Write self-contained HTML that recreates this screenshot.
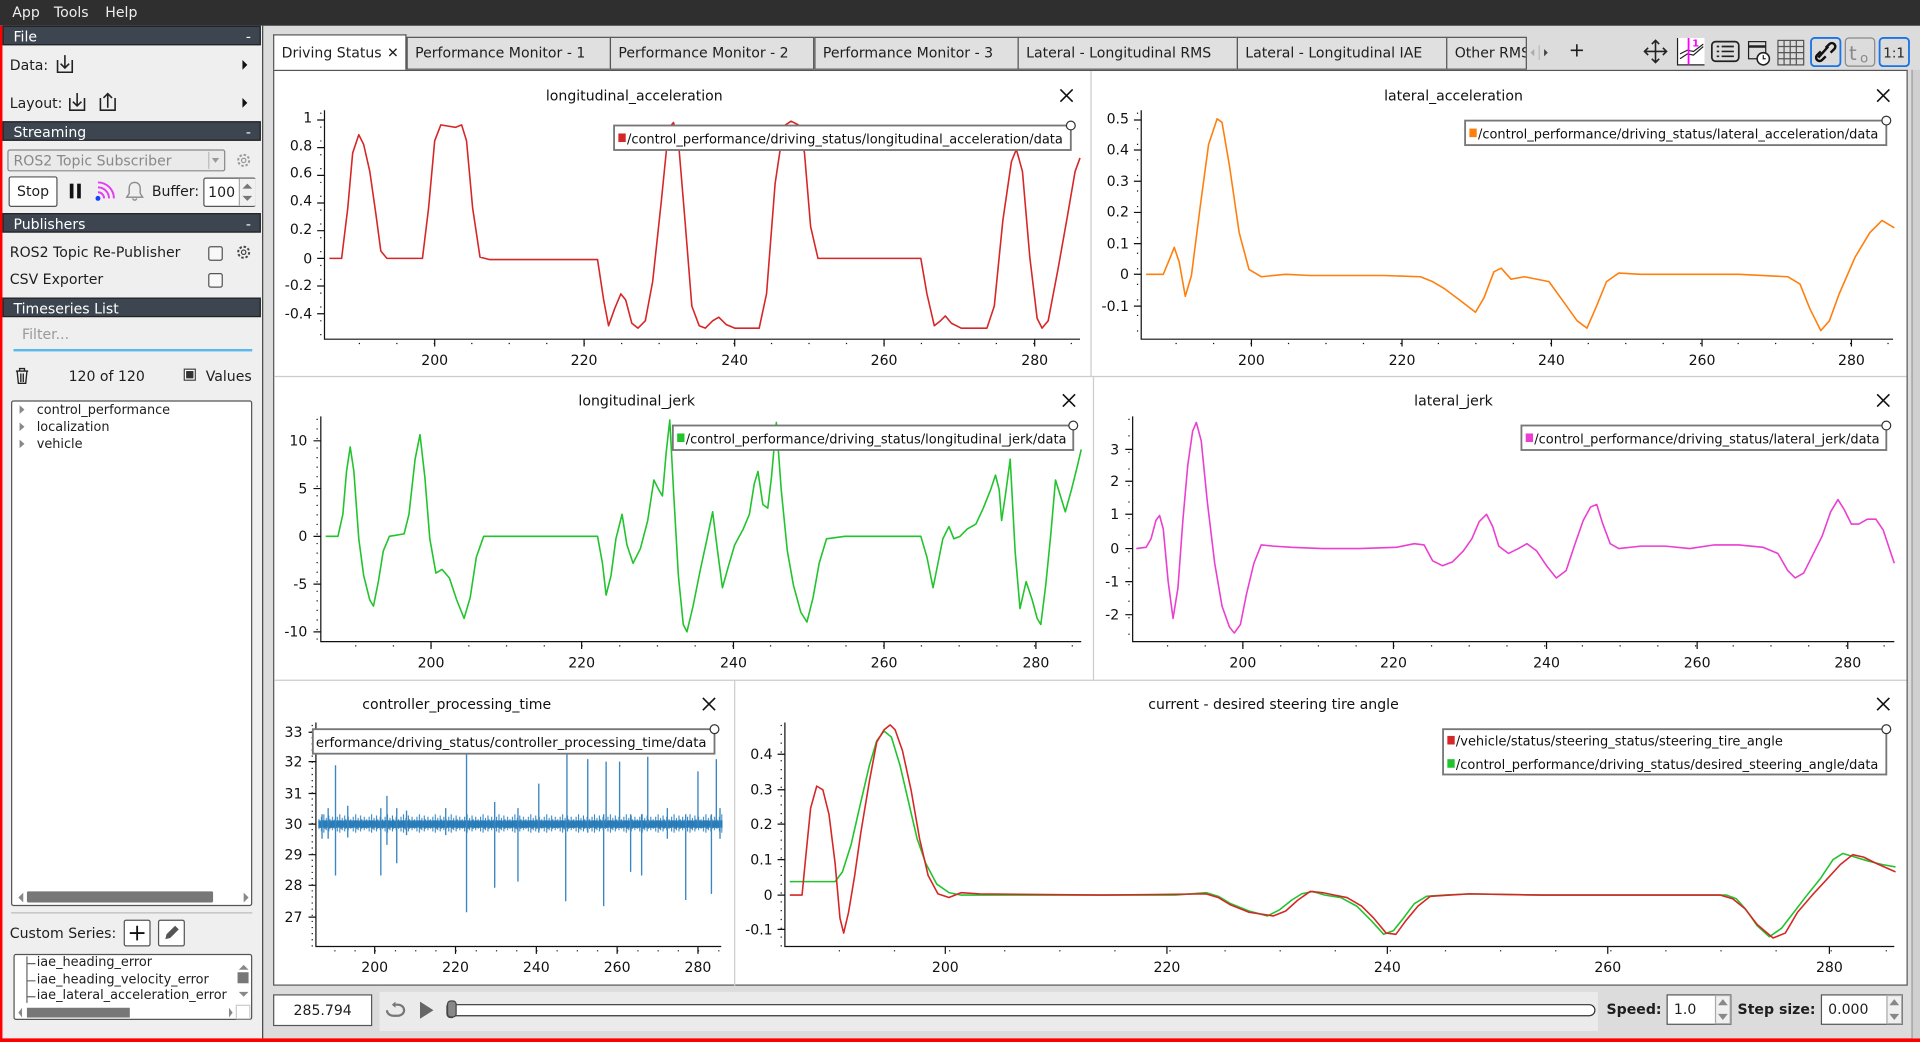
<!DOCTYPE html>
<html><head><meta charset="utf-8">
<style>
html,body{margin:0;padding:0;width:1920px;height:1042px;overflow:hidden;background:#dcdcdc;}
#w{position:absolute;left:0;top:0;width:1568px;height:851px;transform:scale(1.22449);transform-origin:0 0;font-family:"DejaVu Sans","Liberation Sans",sans-serif;font-size:11px;color:#1e1e1e;background:#dcdcdc;}
.a{position:absolute;}
.hdr{position:absolute;left:2px;width:211px;height:16px;background:#3c4550;color:#fff;font-size:11.5px;line-height:16px;border:1px solid #222;box-sizing:border-box;padding-left:8px;}
.hdr span{position:absolute;right:7px;top:0;}
.cb{position:absolute;width:10px;height:10px;border:1px solid #555;border-radius:2px;background:#f8f8f8;}
.tab{position:absolute;top:30px;height:27px;background:#e0e0e0;border:1px solid #555;box-sizing:border-box;font-size:11.5px;line-height:25px;padding-left:6px;white-space:nowrap;overflow:hidden;}
</style></head><body><div id="w">
<div class="a" style="left:0;top:0;width:1568px;height:21px;background:#2f2f2f;"></div>
<div class="a" style="left:10px;top:3px;color:#eee;font-size:11.5px;">App</div>
<div class="a" style="left:44px;top:3px;color:#eee;font-size:11.5px;">Tools</div>
<div class="a" style="left:86px;top:3px;color:#eee;font-size:11.5px;">Help</div>
<div class="a" style="left:0;top:21px;width:214px;height:830px;background:#efefef;"></div>
<div class="a" style="left:0;top:21px;width:2px;height:830px;background:#f00;"></div>
<div class="a" style="left:0;top:848px;width:1568px;height:3px;background:#f00;"></div>
<div class="a" style="left:214px;top:21px;width:1px;height:827px;background:#444;"></div>
<div class="hdr" style="top:21px;">File<span>-</span></div>
<div class="a" style="left:8px;top:46px;font-size:11.5px;">Data:</div>
<div class="a" style="left:8px;top:77px;font-size:11.5px;">Layout:</div>
<svg class="a" style="left:0;top:21px" width="214" height="80" viewBox="0 21 214 80">
<g fill="none" stroke="#222" stroke-width="1.3">
<path d="M47 49v10h12v-10M53 45v10M49.5 52l3.5 3.5 3.5-3.5"/>
<path d="M57 80v10h12v-10M63 76v10M59.5 83l3.5 3.5 3.5-3.5"/>
<path d="M82 80v10h12v-10M88 88v-11M84.5 80l3.5-3.5 3.5 3.5"/>
</g>
<path d="M198 49v8l4-4z M198 80v8l4-4z" fill="#111"/>
</svg>
<div class="hdr" style="top:99px;">Streaming<span>-</span></div>
<div class="a" style="left:6px;top:122px;width:178px;height:18px;border:1px solid #888;border-radius:2px;box-sizing:border-box;background:#eaeaea;color:#888;font-size:11.5px;line-height:16px;padding-left:4px;">ROS2 Topic Subscriber</div>
<div class="a" style="left:170px;top:124px;width:12px;height:14px;border-left:1px solid #bbb;"></div>
<svg class="a" style="left:172px;top:128px" width="8" height="6"><path d="M1 1h6l-3 4z" fill="#999"/></svg>
<svg class="a" style="left:192px;top:124px" width="14" height="14" viewBox="0 0 14 14"><circle cx="7" cy="7" r="4.5" fill="none" stroke="#999" stroke-width="1.6" stroke-dasharray="2 1.5"/><circle cx="7" cy="7" r="1.8" fill="none" stroke="#999"/></svg>
<div class="a" style="left:7px;top:144px;width:40px;height:25px;border:1px solid #555;border-radius:2px;box-sizing:border-box;background:#fff;font-size:11.5px;line-height:23px;text-align:center;">Stop</div>
<div class="a" style="left:57px;top:150px;width:3px;height:12px;background:#111;"></div>
<div class="a" style="left:63px;top:150px;width:3px;height:12px;background:#111;"></div>
<svg class="a" style="left:76px;top:147px" width="20" height="18" viewBox="0 0 20 18"><circle cx="4" cy="15" r="2" fill="#1540ff"/><path d="M4 10a5 5 0 0 1 5 5M4 6a9 9 0 0 1 9 9M4 2a13 13 0 0 1 13 13" fill="none" stroke="#e040f0" stroke-width="1.6"/></svg>
<svg class="a" style="left:102px;top:147px" width="16" height="18" viewBox="0 0 16 18"><path d="M8 2c-3 0-4.5 2-4.5 5v4l-2 3h13l-2-3V7c0-3-1.5-5-4.5-5zM6.5 15a1.5 1.5 0 0 0 3 0" fill="none" stroke="#888" stroke-width="1.1"/></svg>
<div class="a" style="left:124px;top:149px;font-size:11.5px;">Buffer:</div>
<div class="a" style="left:166px;top:145px;width:43px;height:24px;border:1px solid #555;border-radius:2px;box-sizing:border-box;background:#fff;font-size:11.5px;line-height:22px;padding-left:3px;">100</div>
<div class="a" style="left:195px;top:146px;width:13px;height:22px;border-left:1px solid #aaa;background:#f0f0f0;"></div>
<svg class="a" style="left:196px;top:147px" width="12" height="20"><path d="M2 7l4-4 4 4z M2 13l4 4 4-4z" fill="#777"/></svg>
<div class="hdr" style="top:174px;">Publishers<span>-</span></div>
<div class="a" style="left:8px;top:199px;font-size:11.5px;">ROS2 Topic Re-Publisher</div>
<div class="cb" style="left:170px;top:201px;"></div>
<svg class="a" style="left:192px;top:199px" width="14" height="14" viewBox="0 0 14 14"><circle cx="7" cy="7" r="4.5" fill="none" stroke="#444" stroke-width="1.6" stroke-dasharray="2 1.5"/><circle cx="7" cy="7" r="1.8" fill="none" stroke="#444"/></svg>
<div class="a" style="left:8px;top:221px;font-size:11.5px;">CSV Exporter</div>
<div class="cb" style="left:170px;top:223px;"></div>
<div class="hdr" style="top:243px;">Timeseries List</div>
<div class="a" style="left:18px;top:266px;color:#999;font-size:11.5px;">Filter...</div>
<div class="a" style="left:11px;top:285px;width:195px;height:2px;background:#5ab8ec;"></div>
<svg class="a" style="left:11px;top:299px" width="14" height="16" viewBox="0 0 14 16"><path d="M2 4h10M5 4V2h4v2M3 4l1 10h6l1-10M6 6v7M8 6v7" fill="none" stroke="#222" stroke-width="1.1"/></svg>
<div class="a" style="left:56px;top:300px;font-size:11.5px;">120 of 120</div>
<div class="a" style="left:150px;top:301px;width:10px;height:10px;border:1px solid #444;box-sizing:border-box;background:#fff;"></div>
<div class="a" style="left:152px;top:303px;width:6px;height:6px;background:#333;"></div>
<div class="a" style="left:168px;top:300px;font-size:11.5px;">Values</div>
<div class="a" style="left:9px;top:327px;width:197px;height:413px;border:1px solid #555;border-radius:2px;box-sizing:border-box;background:#fff;"></div>
<div class="a" style="left:30px;top:328px;font-size:10.5px;line-height:14px;">control_performance<br>localization<br>vehicle</div>
<svg class="a" style="left:14px;top:330px" width="8" height="40"><path d="M2 1l4 3.5-4 3.5z M2 15l4 3.5-4 3.5z M2 29l4 3.5-4 3.5z" fill="#888"/></svg>
<div class="a" style="left:22px;top:728px;width:152px;height:9px;background:#777;border-radius:1px;"></div>
<svg class="a" style="left:12px;top:727px" width="194" height="12"><path d="M7 2v8l-4-4z M187 2v8l4-4z" fill="#888"/></svg>
<div class="a" style="left:9px;top:745px;width:197px;height:1px;background:#bbb;"></div>
<div class="a" style="left:8px;top:755px;font-size:11.5px;">Custom Series:</div>
<div class="a" style="left:101px;top:751px;width:22px;height:22px;border:1px solid #555;border-radius:2px;box-sizing:border-box;background:#fff;"></div>
<svg class="a" style="left:101px;top:751px" width="22" height="22"><path d="M11 5v12M5 11h12" stroke="#111" stroke-width="1.5"/></svg>
<div class="a" style="left:129px;top:751px;width:22px;height:22px;border:1px solid #555;border-radius:2px;box-sizing:border-box;background:#fff;"></div>
<svg class="a" style="left:129px;top:751px" width="22" height="22"><path d="M6 16l1-4 7-7 3 3-7 7z" fill="#555"/></svg>
<div class="a" style="left:11px;top:779px;width:195px;height:54px;border:1px solid #555;border-radius:2px;box-sizing:border-box;background:#fff;"></div>
<div class="a" style="left:30px;top:780px;font-size:10.5px;line-height:13.7px;white-space:nowrap;">iae_heading_error<br>iae_heading_velocity_error<br>iae_lateral_acceleration_error</div>
<svg class="a" style="left:11px;top:779px" width="195" height="54"><path d="M11 2v38M11 8h7M11 22h7M11 35h7" stroke="#666" fill="none"/><path d="M184 13l4-4 4 4z M184 31l4 4 4-4z" fill="#888"/><rect x="183" y="15" width="9" height="9" fill="#777"/><rect x="11" y="44" width="84" height="8" fill="#777"/><path d="M7 44v8l-3-4z M176 44v8l3-4z" fill="#888"/><rect x="182" y="42" width="11" height="11" fill="#fff" stroke="#ccc"/></svg>
<div class="tab" style="left:223px;top:28px;width:109px;height:30px;background:#fff;border-bottom:none;line-height:29px;">Driving Status <span style="position:absolute;left:92px;top:0;">✕</span></div>
<div class="tab" style="left:332px;width:167px;">Performance Monitor - 1</div>
<div class="tab" style="left:498px;width:167px;">Performance Monitor - 2</div>
<div class="tab" style="left:665px;width:167px;">Performance Monitor - 3</div>
<div class="tab" style="left:831px;width:180px;">Lateral - Longitudinal RMS</div>
<div class="tab" style="left:1010px;width:172px;">Lateral - Longitudinal IAE</div>
<div class="tab" style="left:1181px;width:66px;">Other RMS</div>
<svg class="a" style="left:1245px;top:35px" width="24" height="16"><path d="M8 5v6l-3-3z" fill="#aaa"/><path d="M16 5v6l3-3z" fill="#444"/><path d="M12 2v12" stroke="#bbb"/></svg>
<div class="a" style="left:1281px;top:31px;font-size:16px;">+</div>
<svg class="a" style="left:1335px;top:28px" width="233" height="28" viewBox="0 0 233 28">
<g stroke="#222" stroke-width="1.3" fill="none"><path d="M17 5v18M8 14h18M14 8l3-3 3 3M14 20l3 3 3-3M11 11l-3 3 3 3M23 11l3 3-3 3"/></g>
<rect x="35" y="3" width="22" height="22" fill="#fff"/><path d="M35 3v22h22" stroke="#222" fill="none"/><path d="M37 20l6-4 5 1 8-7M37 16l6-3 5 1 8-6" stroke="#222" fill="none"/><path d="M44 3v22" stroke="#f0f" stroke-width="1.5"/><text x="47" y="10" font-size="8" fill="#f0f" font-weight="bold">1</text>
<rect x="63" y="6" width="22" height="16" rx="3" fill="none" stroke="#222" stroke-width="1.4"/><path d="M67 10h2M71 10h10M67 14h2M71 14h10M67 18h2M71 18h10" stroke="#222" stroke-width="1.4"/>
<rect x="93" y="6" width="14" height="14" fill="none" stroke="#222"/><path d="M93 10h14" stroke="#222" stroke-width="2"/><circle cx="105" cy="20" r="5" fill="#fff" stroke="#222" stroke-width="1.3"/><path d="M105 17v3h2" stroke="#222" fill="none"/>
<g stroke="#555" fill="none"><rect x="117" y="5" width="21" height="20"/><path d="M122 5v20M127 5v20M132 5v20M117 10h21M117 15h21M117 20h21"/></g>
<rect x="144" y="3" width="24" height="23" rx="3" fill="none" stroke="#1a73e8" stroke-width="1.5"/><path d="M150 19l8-9" stroke="#111" stroke-width="2"/><path d="M152 14l-3 3a2.5 2.5 0 0 0 4 4l3-3M160 15l3-3a2.5 2.5 0 0 0-4-4l-3 3" stroke="#111" stroke-width="2" fill="none"/>
<rect x="172" y="3" width="24" height="23" rx="3" fill="none" stroke="#888" stroke-width="1"/><text x="175" y="21" font-size="16" fill="#888">t</text><text x="184" y="23" font-size="11" fill="#888">o</text>
<rect x="200" y="3" width="24" height="23" rx="3" fill="none" stroke="#1a73e8" stroke-width="1.5"/><text x="203" y="19" font-size="11" fill="#222">1:1</text>
</svg>
<div class="a" style="left:223px;top:57px;width:1335px;height:748px;background:#fff;border:1px solid #555;box-sizing:border-box;"></div>
<div class="a" style="left:1561px;top:57px;width:7px;height:791px;background:#d0d0d0;border-left:1px solid #999;"></div>
<div class="a" style="left:310px;top:810px;width:995px;height:32px;background:#ebebeb;"></div>
<div class="a" style="left:223px;top:812px;width:81px;height:26px;border:1px solid #555;box-sizing:border-box;background:#fff;font-size:11.5px;line-height:24px;text-align:center;">285.794</div>
<svg class="a" style="left:310px;top:812px" width="60" height="26"><path d="M6 13a5 4.5 0 0 0 5 4.5h4a5 4.5 0 0 0 0-9h-4" fill="none" stroke="#777" stroke-width="1.8"/><path d="M13 6l-3 2.5 3 2.5z" fill="#777"/><path d="M33 6v14l11-7z" fill="#666"/><rect x="55" y="7" width="8" height="12" rx="3" fill="#888" stroke="#444"/></svg>
<div class="a" style="left:367px;top:820px;width:936px;height:10px;border:1px solid #333;border-radius:5px;box-sizing:border-box;background:#fff;"></div>
<div class="a" style="left:365px;top:817px;width:8px;height:14px;border-radius:3px;background:#888;border:1px solid #444;box-sizing:border-box;"></div>
<div class="a" style="left:1312px;top:817px;font-weight:bold;font-size:11.5px;">Speed:</div>
<div class="a" style="left:1361px;top:812px;width:53px;height:25px;border:1px solid #555;box-sizing:border-box;background:#fff;font-size:11.5px;line-height:23px;padding-left:5px;">1.0</div>
<div class="a" style="left:1419px;top:817px;font-weight:bold;font-size:11.5px;">Step size:</div>
<div class="a" style="left:1487px;top:812px;width:67px;height:25px;border:1px solid #555;box-sizing:border-box;background:#fff;font-size:11.5px;line-height:23px;padding-left:5px;">0.000</div>
<svg class="a" style="left:1400px;top:812px" width="160" height="25"><g fill="#f0f0f0" stroke="#aaa"><rect x="1" y="1" width="12" height="23"/><rect x="141" y="1" width="12" height="23"/></g><path d="M3 9l4-5 4 5zM3 16l4 5 4-5zM143 9l4-5 4 5zM143 16l4 5 4-5z" fill="#888"/></svg>

<svg class="a" style="left:0;top:0" width="1568" height="851" viewBox="0 0 1568 851" font-family="DejaVu Sans, Liberation Sans, sans-serif">
<defs>
<pattern id="nz" x="0" y="661" width="13" height="24" patternUnits="userSpaceOnUse">
<g stroke="#3a86c0" stroke-width="0.9">
<path d="M0.5 8v8M1.5 10v5M2.5 6v12M3.5 9v5M4.5 4v15M5.5 9v7M6.5 7v10M7.5 10v4M8.5 5v13M9.5 8v8M10.5 10v5M11.5 6v11M12.5 9v6"/>
</g>
</pattern>
</defs>
<g stroke="#ccc"><path d="M891 58v249M893 308v247M600 556v249M224 307.5h1333M224 555.5h1333"/></g>
<g font-size="11.5" fill="#111" text-anchor="middle">
<text x="518" y="82">longitudinal_acceleration</text>
<text x="1187" y="82">lateral_acceleration</text>
<text x="520" y="331">longitudinal_jerk</text>
<text x="1187" y="331">lateral_jerk</text>
<text x="373" y="579">controller_processing_time</text>
<text x="1040" y="579">current - desired steering tire angle</text>
</g>
<g stroke="#111" stroke-width="1.3"><path d="M866 73l10 10M876 73l-10 10M1533 73l10 10M1543 73l-10 10M868 322l10 10M878 322l-10 10M1533 322l10 10M1543 322l-10 10M574 570l10 10M584 570l-10 10M1533 570l10 10M1543 570l-10 10"/></g>
<g stroke="#111" fill="none">
<path d="M265 90v187h617"/><path d="M932 90v187h614"/>
<path d="M262 340v184h621"/><path d="M925 340v184h622"/>
<path d="M258 590v183h331"/><path d="M641 590v183h906"/>
</g>
<g stroke="#111" stroke-width="1">
<path d="M259 98h6M259 120.6h6M259 143.2h6M259 165.8h6M259 188.4h6M259 211h6M259 233.6h6M259 256.2h6"/>
<path d="M926 98h6M926 122.5h6M926 148h6M926 173.5h6M926 199h6M926 224h6M926 250h6"/>
<path d="M256 360h6M256 399h6M256 438h6M256 477h6M256 516h6"/>
<path d="M919 367h6M919 393h6M919 420h6M919 448h6M919 475h6M919 502h6"/>
<path d="M252 598h6M252 622h6M252 648h6M252 673h6M252 698h6M252 723h6M252 749h6"/>
<path d="M635 616h6M635 645h6M635 673h6M635 702h6M635 731h6M635 759h6"/>
<path d="M355 277v6M477 277v6M600 277v6M722 277v6M845 277v6"/>
<path d="M1022 277v6M1145 277v6M1267 277v6M1390 277v6M1512 277v6"/>
<path d="M352 524v6M475 524v6M599 524v6M722 524v6M846 524v6"/>
<path d="M1015 524v6M1138 524v6M1263 524v6M1386 524v6M1509 524v6"/>
<path d="M306 773v6M372 773v6M438 773v6M504 773v6M570 773v6"/>
<path d="M772 773v6M953 773v6M1133 773v6M1313 773v6M1494 773v6"/>
</g>
<g stroke="#111" stroke-width="1">
<path d="M270 280.5H882" stroke-dasharray="1 29.6" stroke-dashoffset="-23"/>
<path d="M937 280.5H1546" stroke-dasharray="1 29.6" stroke-dashoffset="-23"/>
<path d="M267 527.5H883" stroke-dasharray="1 29.8" stroke-dashoffset="-23"/>
<path d="M930 527.5H1547" stroke-dasharray="1 29.8" stroke-dashoffset="-23"/>
<path d="M262 776.5H589" stroke-dasharray="1 15.5" stroke-dashoffset="-11"/>
<path d="M645 776.5H1547" stroke-dasharray="1 44" stroke-dashoffset="-40"/>
<path d="M262 92V277" stroke-dasharray="1 10.3"/>
<path d="M929 92V277" stroke-dasharray="1 11.7"/>
<path d="M259 342V524" stroke-dasharray="1 6.8"/>
<path d="M922 342V524" stroke-dasharray="1 12.5"/>
<path d="M255 592V773" stroke-dasharray="1 4"/>
<path d="M638 592V773" stroke-dasharray="1 6.2"/>
</g>
<g font-size="11.5" fill="#111" text-anchor="end">
<text x="255" y="100">1</text><text x="255" y="123">0.8</text><text x="255" y="145">0.6</text><text x="255" y="168">0.4</text><text x="255" y="191">0.2</text><text x="255" y="215">0</text><text x="255" y="237">-0.2</text><text x="255" y="260">-0.4</text>
<text x="922" y="101">0.5</text><text x="922" y="126">0.4</text><text x="922" y="152">0.3</text><text x="922" y="177">0.2</text><text x="922" y="203">0.1</text><text x="922" y="228">0</text><text x="922" y="254">-0.1</text>
<text x="251" y="364">10</text><text x="251" y="403">5</text><text x="251" y="442">0</text><text x="251" y="481">-5</text><text x="251" y="520">-10</text>
<text x="914" y="371">3</text><text x="914" y="397">2</text><text x="914" y="424">1</text><text x="914" y="452">0</text><text x="914" y="479">-1</text><text x="914" y="506">-2</text>
<text x="247" y="602">33</text><text x="247" y="626">32</text><text x="247" y="652">31</text><text x="247" y="677">30</text><text x="247" y="702">29</text><text x="247" y="727">28</text><text x="247" y="753">27</text>
<text x="631" y="620">0.4</text><text x="631" y="649">0.3</text><text x="631" y="677">0.2</text><text x="631" y="706">0.1</text><text x="631" y="735">0</text><text x="631" y="763">-0.1</text>
</g>
<g font-size="11.5" fill="#111" text-anchor="middle">
<text x="355" y="298">200</text><text x="477" y="298">220</text><text x="600" y="298">240</text><text x="722" y="298">260</text><text x="845" y="298">280</text>
<text x="1022" y="298">200</text><text x="1145" y="298">220</text><text x="1267" y="298">240</text><text x="1390" y="298">260</text><text x="1512" y="298">280</text>
<text x="352" y="545">200</text><text x="475" y="545">220</text><text x="599" y="545">240</text><text x="722" y="545">260</text><text x="846" y="545">280</text>
<text x="1015" y="545">200</text><text x="1138" y="545">220</text><text x="1263" y="545">240</text><text x="1386" y="545">260</text><text x="1509" y="545">280</text>
<text x="306" y="794">200</text><text x="372" y="794">220</text><text x="438" y="794">240</text><text x="504" y="794">260</text><text x="570" y="794">280</text>
<text x="772" y="794">200</text><text x="953" y="794">220</text><text x="1133" y="794">240</text><text x="1313" y="794">260</text><text x="1494" y="794">280</text>
</g>
<g fill="none" stroke-width="1.3" stroke-linejoin="round">
<polyline stroke="#d62728" points="269,211 279,211 284,170 288,125 293,110 297,118 302,140 307,175 311,205 316,211 345,211 350,170 355,115 360,102 366,103 372,104 377,102 381,115 386,170 392,210 400,212 488,212 493,245 497,266 502,252 507,240 511,245 516,264 521,268 527,262 533,230 540,165 546,105 550,100 554,115 559,175 565,250 571,266 576,268 582,262 587,259 593,265 600,268 620,268 626,240 633,150 640,103 646,99 652,102 657,125 662,185 668,211 752,211 757,240 763,266 768,262 772,258 777,264 785,268 806,268 812,250 819,180 826,132 830,122 835,140 841,210 847,260 851,268 856,262 864,220 872,175 878,140 882,129"/>
<polyline stroke="#ff7f0e" points="936,224 950,224 955,212 959,202 963,214 968,242 973,225 980,170 987,118 994,97 998,100 1004,135 1012,190 1020,220 1030,226 1050,224 1070,225 1100,225 1130,225 1160,226 1170,230 1180,236 1192,245 1205,255 1212,243 1220,222 1226,219 1234,228 1245,226 1265,230 1278,248 1288,262 1296,268 1303,252 1312,230 1322,223 1340,224 1380,224 1420,224 1460,226 1470,232 1478,252 1487,270 1494,262 1502,240 1515,210 1527,190 1537,180 1547,186"/>
<polyline stroke="#22c42e" points="266,438 276,438 280,420 283,385 286,365 289,385 293,440 297,470 302,490 305,495 309,475 313,450 318,438 330,436 334,420 339,375 343,355 347,390 351,440 356,468 361,465 367,472 373,490 379,505 384,488 389,455 395,438 488,438 492,460 495,486 499,470 503,440 508,420 512,445 517,460 523,448 529,425 534,392 538,400 541,405 544,370 547,343 550,400 554,470 558,510 561,516 566,495 572,465 577,442 582,418 586,450 590,480 595,462 600,445 607,432 612,420 616,395 619,385 623,412 627,415 630,390 634,345 638,400 643,450 648,478 654,500 659,508 664,488 669,460 675,440 690,438 752,438 757,455 762,480 766,460 770,440 775,430 779,440 784,438 790,432 797,428 803,415 809,400 813,388 816,400 818,425 821,405 825,375 829,450 833,497 838,475 843,490 847,505 850,510 854,478 858,438 862,392 866,405 870,418 875,400 880,380 883,367"/>
<polyline stroke="#ea3fd0" points="928,448 936,447 940,440 944,425 947,421 950,432 954,475 958,505 962,480 966,425 970,380 974,352 977,345 981,360 986,410 992,460 998,495 1004,512 1008,517 1013,510 1018,485 1024,460 1030,445 1040,446 1055,447 1080,448 1110,448 1140,447 1155,444 1163,445 1170,458 1178,462 1186,459 1195,450 1202,440 1208,426 1214,420 1219,430 1224,446 1232,452 1240,448 1247,444 1255,450 1263,462 1271,472 1279,466 1286,445 1293,425 1299,414 1304,412 1309,428 1315,444 1322,448 1340,446 1360,446 1380,448 1400,445 1420,445 1440,447 1452,452 1460,466 1466,472 1473,468 1480,454 1488,438 1495,418 1501,408 1506,416 1512,428 1518,428 1525,424 1532,424 1538,433 1543,448 1547,460"/>
<polyline stroke="#22c42e" points="645,720 682,720 688,712 695,690 703,655 710,625 716,605 722,597 728,602 735,625 742,655 749,685 756,705 765,722 775,729 785,731 900,731 960,731 985,729 995,732 1005,738 1020,744 1035,748 1045,743 1055,735 1063,730 1072,728 1082,731 1095,733 1108,740 1120,752 1130,763 1138,760 1146,750 1155,738 1165,732 1180,731 1200,730 1260,731 1300,731 1380,731 1410,731 1418,734 1426,743 1435,756 1445,765 1455,758 1465,745 1475,732 1487,717 1497,702 1505,697 1515,700 1525,703 1537,706 1548,708"/>
<polyline stroke="#d62728" points="645,731 655,731 658,700 662,660 667,642 672,645 677,665 682,705 686,750 689,762 693,745 698,715 703,680 710,638 716,606 722,596 727,592 731,596 737,613 744,645 751,685 758,715 766,730 775,733 785,729 800,730 900,731 985,730 995,733 1005,739 1020,745 1040,748 1050,744 1060,735 1070,728 1080,729 1090,731 1100,733 1112,740 1122,750 1132,762 1140,763 1148,752 1158,740 1168,732 1200,730 1260,731 1300,731 1405,731 1415,734 1425,742 1435,755 1448,766 1458,762 1468,745 1480,731 1492,718 1503,706 1513,698 1522,700 1532,705 1548,712"/>
</g>
<rect x="260" y="661" width="330" height="24" fill="url(#nz)"/>
<rect x="260" y="670" width="330" height="6" fill="#1f77b4" opacity="0.8"/>
<g stroke="#3a86c0" stroke-width="1.1">
<path d="M263 665v20M268 660v25M274 625v90M284 658v26M311 660v55M316 650v40M324 660v45M332 662v20M364 660v22M381 612v133M404 655v70M423 660v60M440 640v40M462 672v64M463 610v62M480 620v60M493 665v75M495 622v50M506 622v50M515 665v47M524 665v50M529 618v55M545 660v25M560 665v70M570 630v45M581 665v65M585 620v50M588 660v25"/>
</g>
<g font-size="10.5" fill="#111" lengthAdjust="spacingAndGlyphs">
<rect x="501.5" y="102.5" width="373" height="20" fill="#fff" stroke="#777" stroke-width="1.5"/><rect x="505" y="109" width="6" height="7" fill="#d62728"/><text x="512" y="117" textLength="356" lengthAdjust="spacingAndGlyphs">/control_performance/driving_status/longitudinal_acceleration/data</text><circle cx="874.5" cy="102.5" r="3.6" fill="#fff" stroke="#333"/>
<rect x="1196.5" y="98.5" width="344" height="20" fill="#fff" stroke="#777" stroke-width="1.5"/><rect x="1200" y="105" width="6" height="7" fill="#ff7f0e"/><text x="1207" y="113" textLength="327" lengthAdjust="spacingAndGlyphs">/control_performance/driving_status/lateral_acceleration/data</text><circle cx="1540.5" cy="98.5" r="3.6" fill="#fff" stroke="#333"/>
<rect x="549.5" y="347.5" width="327" height="20" fill="#fff" stroke="#777" stroke-width="1.5"/><rect x="553" y="354" width="6" height="7" fill="#22c42e"/><text x="560" y="362" textLength="311" lengthAdjust="spacingAndGlyphs">/control_performance/driving_status/longitudinal_jerk/data</text><circle cx="876.5" cy="347.5" r="3.6" fill="#fff" stroke="#333"/>
<rect x="1242.5" y="347.5" width="298" height="20" fill="#fff" stroke="#777" stroke-width="1.5"/><rect x="1246" y="354" width="6" height="7" fill="#ea3fd0"/><text x="1253" y="362" textLength="282" lengthAdjust="spacingAndGlyphs">/control_performance/driving_status/lateral_jerk/data</text><circle cx="1540.5" cy="347.5" r="3.6" fill="#fff" stroke="#333"/>
<rect x="255.5" y="595.5" width="328" height="20" fill="#fff" stroke="#777" stroke-width="1.5"/><text x="258" y="610" textLength="319" lengthAdjust="spacingAndGlyphs">erformance/driving_status/controller_processing_time/data</text><circle cx="583.5" cy="595.5" r="3.6" fill="#fff" stroke="#333"/>
<rect x="1178.5" y="595.5" width="362" height="37" fill="#fff" stroke="#777" stroke-width="1.5"/><rect x="1182" y="601" width="6" height="7" fill="#d62728"/><text x="1189" y="609" textLength="267" lengthAdjust="spacingAndGlyphs">/vehicle/status/steering_status/steering_tire_angle</text><rect x="1182" y="620" width="6" height="7" fill="#22c42e"/><text x="1189" y="628" textLength="345" lengthAdjust="spacingAndGlyphs">/control_performance/driving_status/desired_steering_angle/data</text><circle cx="1540.5" cy="595.5" r="3.6" fill="#fff" stroke="#333"/>
</g>
</svg>
</div></body></html>
